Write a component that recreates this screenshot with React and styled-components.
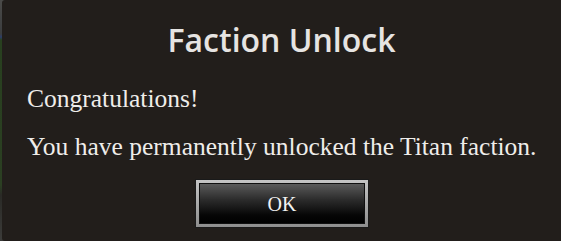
import styled, { createGlobalStyle } from 'styled-components'

const GlobalStyle = createGlobalStyle`
    html, body {
        margin:0;
        padding:0;
        width:561px;
        height:241px;
        overflow:hidden;
        background:linear-gradient(180deg, #4a4a48 0px, #3b3d3f 34px, #2c3d6a 37px, #28401f 40px, #2b3f22 185px, #2a2a26 195px, #3c3c3a 241px);
    }
`;

const Dialog = styled.div`
    box-sizing:border-box;
    margin-left:2px;
    width:559px;
    height:241px;
    background:#221e1b;
    border-top-left-radius:3px;
    border-bottom-left-radius:3px;
    display:flex;
    flex-direction:column;
    padding:20px 0 0 25px;
    color:#e8e6e3;
`;

const Title = styled.h1`
    margin:0 25px 0 0;
    text-align:center;
    font-family:"Open Sans", "Noto Sans", sans-serif;
    font-weight:600;
    font-size:32px;
    line-height:40px;
    color:#e6e4e2;
`;

const Message = styled.p`
    margin:${p => p.$top}px 0 0 0;
    font-family:"Liberation Serif", "DejaVu Serif", serif;
    font-size:25.5px;
    line-height:30px;
    color:#efedea;
    white-space:nowrap;
`;

const ButtonRow = styled.div`
    display:flex;
    justify-content:center;
    margin:17px 25px 0 0;
    padding-left:1px;
`;

const OkButton = styled.button`
    box-sizing:border-box;
    width:174px;
    height:49px;
    padding:0;
    border:1px solid #1a1a1a;
    background:linear-gradient(180deg, #c4c4c4, #8e8e8e);
    cursor:pointer;
    display:flex;
`;

const ButtonFace = styled.span`
    flex:1;
    margin:3px;
    border:1px solid #101010;
    background:linear-gradient(180deg, #5a5a5a 0%, #2c2c2c 40%, #060606 80%, #000 100%);
    display:flex;
    align-items:center;
    justify-content:center;
    font-family:"Liberation Serif", "DejaVu Serif", serif;
    font-size:20px;
    color:#f2f2f2;
    padding-top:1px;
`;

function App(){
    return (
        <>
        <GlobalStyle />
        <Dialog>
            <Title>Faction Unlock</Title>
            <Message $top={24}>Congratulations!</Message>
            <Message $top={18}>You have permanently unlocked the Titan faction.</Message>
            <ButtonRow>
                <OkButton type="button">
                    <ButtonFace>OK</ButtonFace>
                </OkButton>
            </ButtonRow>
        </Dialog>
        </>
    )
}

export default App;
